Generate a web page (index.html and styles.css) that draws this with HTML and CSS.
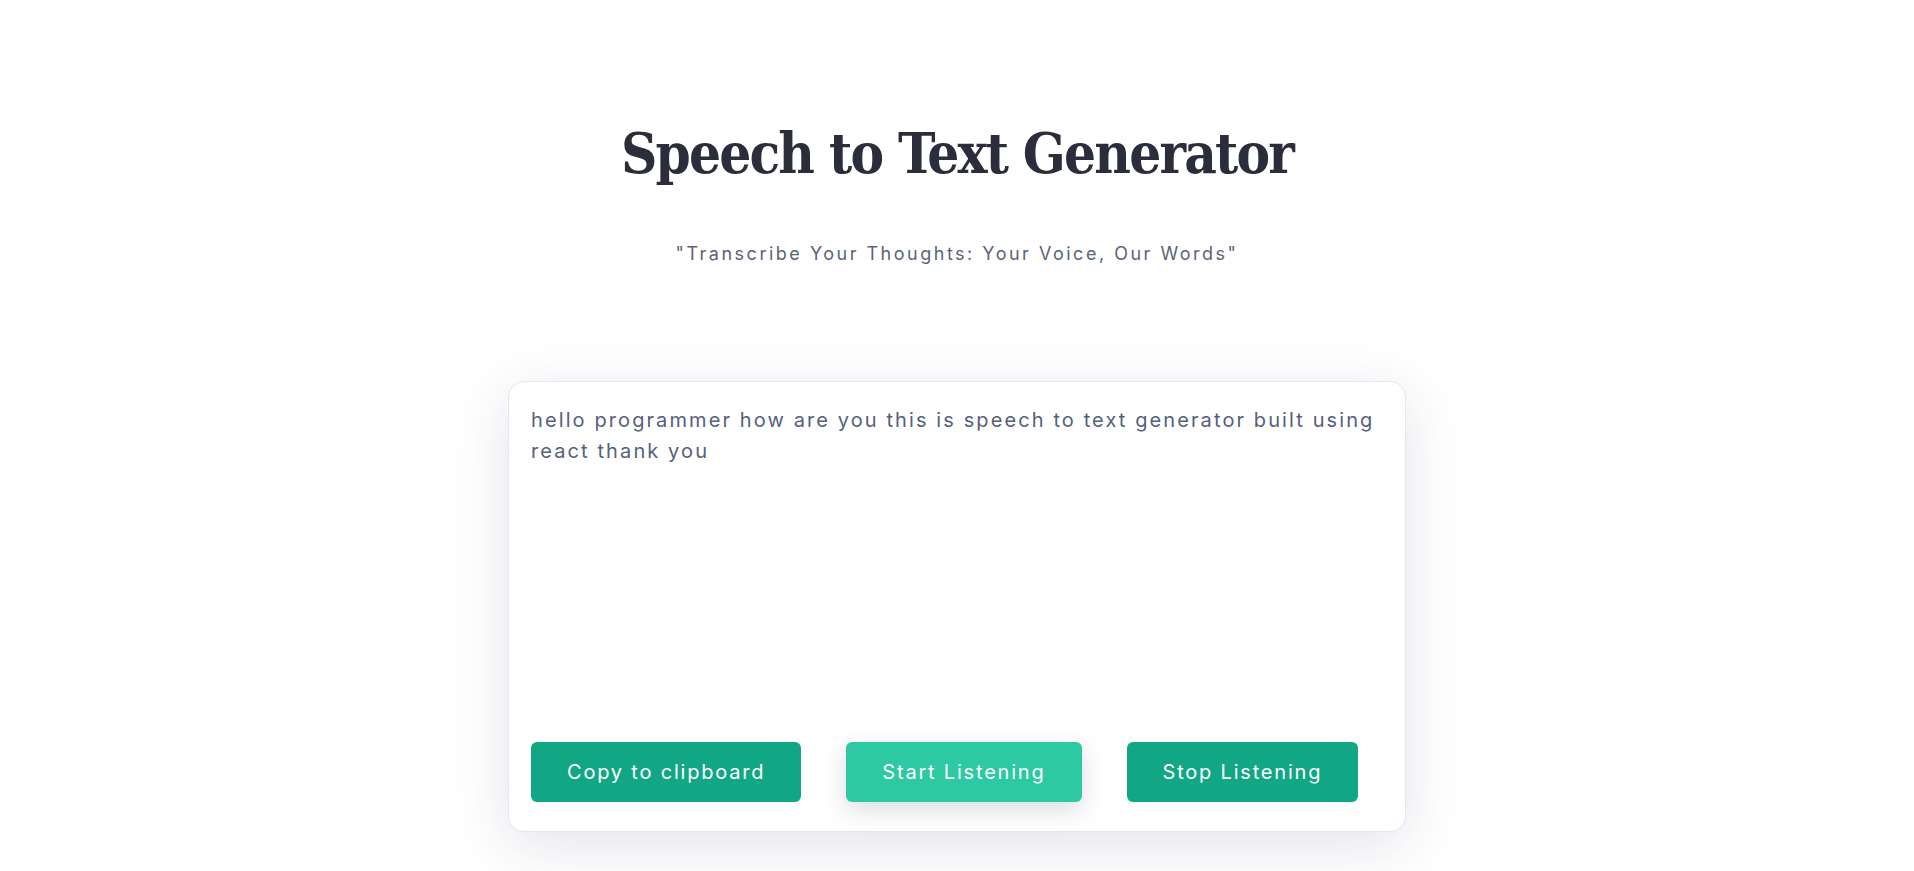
FILE: index.html
```html
<!DOCTYPE html>
<html lang="en">
<head>
<meta charset="utf-8">
<title>Speech to Text Generator</title>
<link rel="stylesheet" href="styles.css">
</head>
<body>
<main class="container">
  <h2 class="title">Speech to Text Generator</h2>
  <p class="tagline">"Transcribe Your Thoughts: Your Voice, Our Words"</p>
  <section class="card">
    <div class="transcript">hello programmer how are you this is speech to text generator built using react thank you</div>
    <div class="actions">
      <button class="btn btn-copy">Copy to clipboard</button>
      <button class="btn btn-start">Start Listening</button>
      <button class="btn btn-stop">Stop Listening</button>
    </div>
  </section>
</main>
</body>
</html>
```

FILE: styles.css
```css
* { box-sizing: border-box; }
html, body { margin: 0; padding: 0; background: #ffffff; }
body { font-family: "Inter", "Liberation Sans", sans-serif; min-height: 100vh; }

.container {
  width: 900px;
  margin: 0 auto;
  padding-top: 118px;
  padding-bottom: 40px;
  display: flex;
  flex-direction: column;
  align-items: center;
}

.title {
  margin: 0;
  font-family: "DejaVu Serif Condensed", "DejaVu Serif", serif;
  font-weight: 700;
  font-size: 56px;
  line-height: 70px;
  color: #2b2d3b;
  letter-spacing: -1.8px;
}

.tagline {
  margin: 54px 0 0 0;
  font-size: 18px;
  line-height: 24px;
  color: #5b6378;
  letter-spacing: 2.5px;
}

.card {
  margin-top: 115px;
  width: 898px;
  height: 451px;
  background: #ffffff;
  border: 1px solid #e4e6f4;
  border-radius: 16px;
  box-shadow: 0 14px 60px rgba(40, 44, 90, 0.13);
  padding: 23px 22px 29px 22px;
  display: flex;
  flex-direction: column;
}

.transcript {
  flex: 1;
  font-size: 20px;
  line-height: 31px;
  color: #55607e;
  letter-spacing: 2.1px;
}

.actions {
  display: flex;
  gap: 45px;
}

.btn {
  height: 60px;
  border: none;
  border-radius: 6px;
  padding: 0 36px;
  font-family: "Inter", "Liberation Sans", sans-serif;
  font-size: 20px;
  letter-spacing: 1.8px;
  color: #ffffff;
  background: #12a784;
  cursor: pointer;
}

.btn-start {
  background: #2cc9a2;
  box-shadow: 0 8px 24px rgba(40, 44, 90, 0.16);
}
```
